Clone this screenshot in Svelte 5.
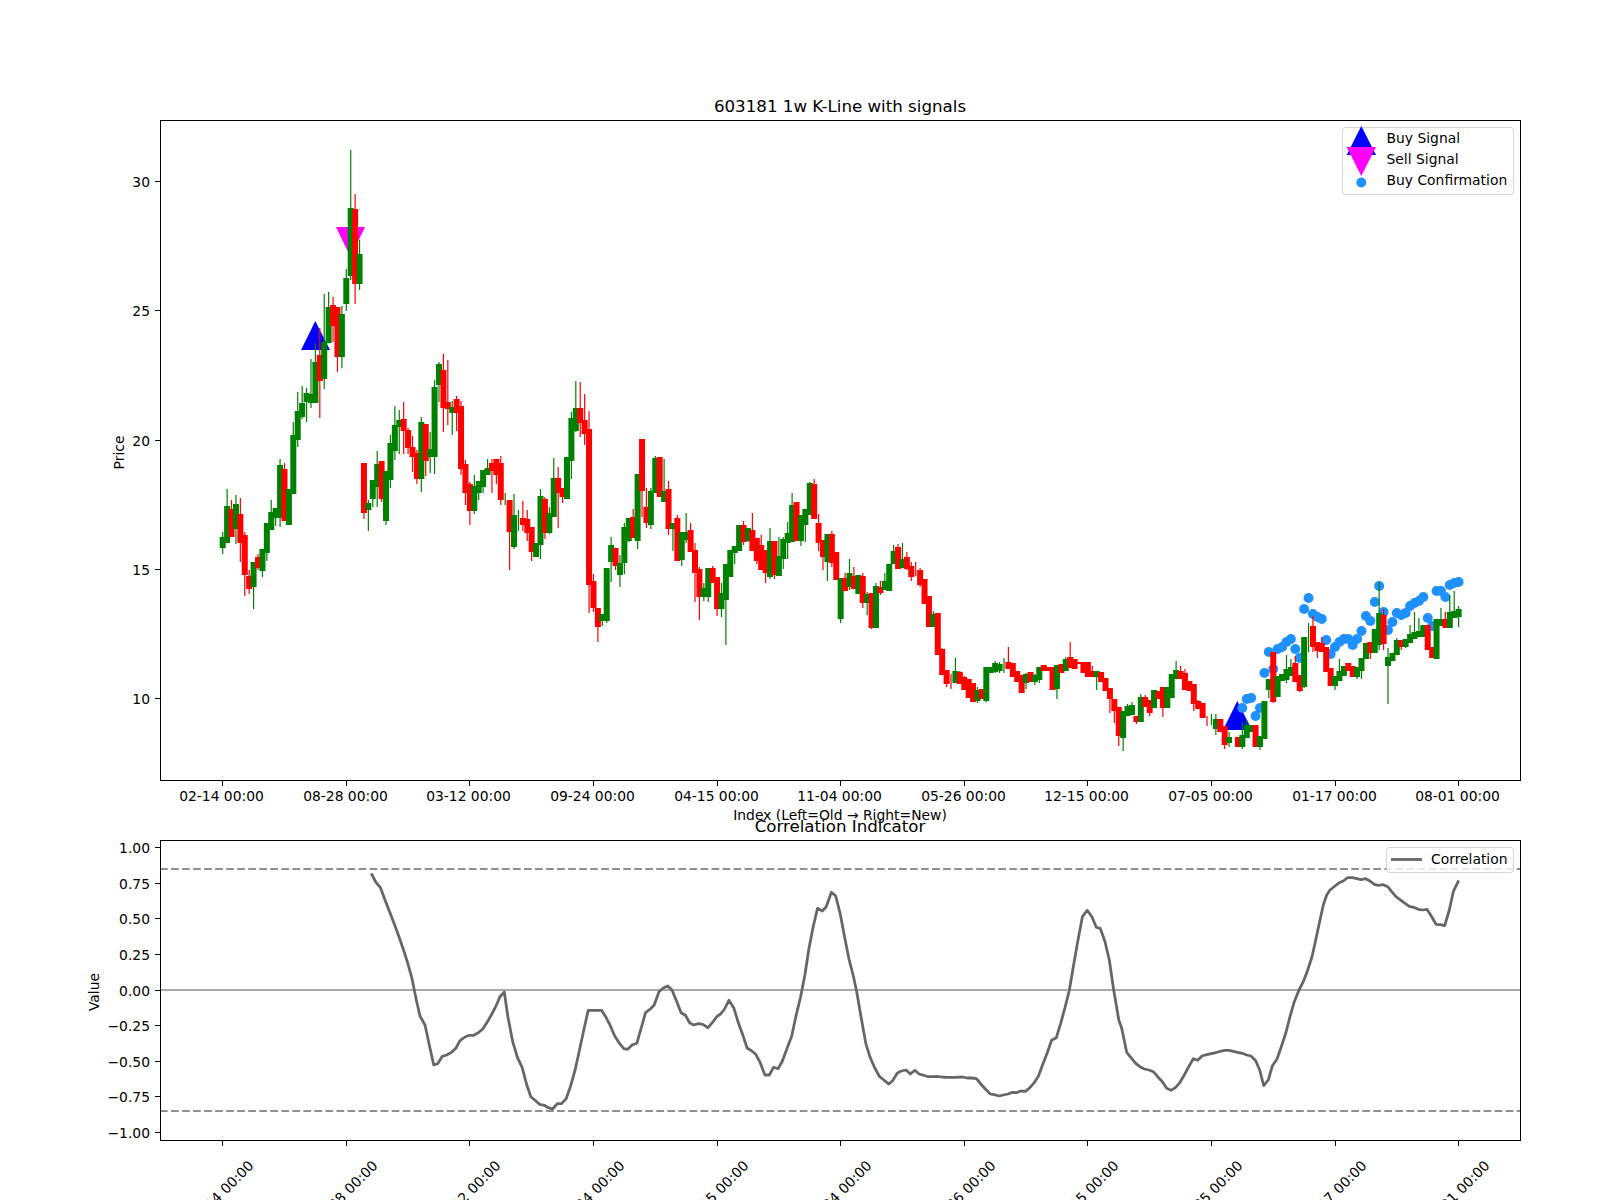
<script>
  const X0 = 222.7;
  const STEP = 4.414;
  const xOf = (i) => X0 + STEP * i;
  const snap = (v) => Math.floor(v) + 0.5;

  // colour, body top, body bottom, wick top, wick bottom (in chart pixels, oldest first)
  const rawCandles = `G 537 548 532 554,G 506 543 489 543,R 509 537 500 537,G 504 529 495 544,R 514 543 498 562,
  R 535 575 532 596,R 576 589 570 594,G 562 587 562 609,R 557 568 554 570,G 549 571 549 577,
  G 523 553 523 561,G 512 530 500 530,G 508 518 508 526,G 465 518 459 527,R 469 521 463 521,
  G 489 525 489 525,G 435 494 422 494,G 411 440 392 447,G 403 417 386 419,G 393 402 388 422,
  G 394 403 359 408,G 362 403 343 403,R 355 381 328 418,G 342 379 294 389,G 307 343 292 343,
  R 305 326 297 342,R 307 357 307 372,G 314 357 306 368,G 278 304 269 311,G 208 276 150 280,
  R 209 284 194 304,G 254 284 240 290,R 463 513 463 519,G 503 510 500 531,G 480 499 480 507,
  G 464 487 451 507,R 461 499 461 502,G 471 521 471 525,G 443 480 435 488,G 425 451 406 460,
  G 420 427 410 454,R 419 431 402 454,R 430 448 428 454,R 447 457 436 472,R 453 479 450 484,
  G 422 479 417 492,R 424 461 424 476,G 449 457 432 473,G 387 457 380 474,G 364 385 362 402,
  R 370 408 354 432,R 402 409 360 425,G 407 413 401 435,R 399 413 396 431,R 406 469 401 475,
  R 464 493 460 505,R 484 511 482 525,G 486 511 475 514,G 481 493 481 500,G 470 487 470 493,
  G 468 475 459 475,R 463 471 459 493,R 459 475 459 484,R 463 500 456 505,G 499 499 493 505,
  R 500 532 500 570,G 515 547 494 549,G 520 520 510 531,R 518 525 501 531,R 519 533 510 541,
  R 527 552 527 561,G 543 557 543 557,G 496 545 489 559,R 499 533 497 539,G 513 533 507 534,
  G 478 517 458 517,R 478 493 467 528,R 488 497 488 503,G 457 499 457 499,G 418 461 412 479,
  G 408 431 381 432,R 408 423 382 437,R 420 434 394 445,R 429 585 411 613,R 581 608 574 612,
  R 608 627 608 642,G 614 621 614 626,G 568 621 568 623,G 545 562 537 582,R 548 566 548 570,
  G 563 575 555 587,G 527 563 523 574,G 518 541 518 542,R 517 538 509 538,G 474 541 474 549,
  R 439 491 439 517,R 507 523 488 528,G 491 525 488 529,G 458 493 456 493,R 457 497 457 497,
  G 491 502 459 502,R 489 529 481 535,G 523 529 523 551,R 518 561 515 561,G 532 560 532 566,
  G 532 540 513 543,R 530 552 523 552,R 550 573 543 602,R 569 597 567 620,G 588 597 583 601,
  G 568 597 568 602,R 568 583 566 583,R 577 609 577 616,G 593 609 583 617,G 564 600 564 645,
  G 550 577 550 577,G 546 553 546 564,G 525 551 525 551,R 525 542 521 545,G 528 541 528 542,
  R 530 551 513 551,R 538 561 538 564,R 545 570 535 570,R 550 573 550 583,G 541 577 528 579,
  R 541 575 541 579,G 556 576 537 576,G 539 559 537 569,G 533 543 522 559,G 505 542 493 542,
  R 502 541 502 541,G 515 541 515 546,G 509 525 509 542,G 483 515 482 515,R 484 519 479 519,
  R 523 543 514 551,R 540 557 540 570,G 534 562 534 581,R 534 563 531 567,R 552 580 552 580,
  G 578 619 578 623,R 578 591 573 591,G 573 587 559 590,R 576 589 567 589,G 575 594 575 594,
  R 576 603 573 608,G 594 603 592 615,R 593 628 593 629,G 586 628 583 628,R 587 593 581 595,
  G 581 590 573 590,G 564 591 564 591,G 551 564 545 564,R 547 569 544 569,G 559 568 543 568,
  R 557 569 552 570,R 566 577 562 581,R 570 570 562 576,R 570 585 568 587,R 579 604 579 604,
  R 596 627 596 627,G 614 627 611 627,R 613 655 613 655,R 649 675 648 675,R 670 684 670 687,
  R 680 680 674 689,G 671 683 658 683,R 672 684 671 684,R 677 690 676 690,R 679 698 679 698,
  R 683 702 683 702,G 690 701 687 703,R 689 699 689 699,G 667 701 667 702,G 667 673 667 673,
  G 663 672 661 673,G 664 671 662 673,G 665 665 658 673,R 662 669 647 669,R 663 677 663 677,
  R 671 682 671 682,R 675 693 675 693,G 674 683 673 689,R 672 682 672 682,G 675 682 674 685,
  G 667 680 667 683,R 665 671 665 671,R 667 671 667 671,R 667 690 667 690,G 665 689 665 699,
  R 664 673 664 673,G 659 671 657 671,R 657 668 642 668,R 659 669 659 669,R 662 664 662 664,
  R 662 673 662 673,R 662 677 662 677,R 671 677 666 677,G 671 677 671 690,R 672 682 672 682,
  R 678 691 678 691,R 688 699 688 713,R 699 711 699 723,R 707 736 707 746,G 711 738 711 751,
  G 706 716 704 716,G 705 715 702 715,R 716 722 716 724,G 697 722 694 722,R 697 707 695 707,
  R 700 713 700 716,G 690 708 690 708,R 691 699 691 699,R 687 708 687 717,G 687 708 687 708,
  G 674 698 674 698,G 670 679 661 679,R 671 679 666 679,R 673 690 669 690,R 681 691 681 691,
  R 684 704 684 711,R 701 709 700 709,R 703 718 703 718,R 720 720 716 726,G 720 720 714 725,
  G 719 729 714 735,R 719 732 719 732,R 726 745 726 749,G 737 743 732 747,G 737 737 737 737,
  R 737 747 737 747,G 735 747 722 749,G 725 738 720 738,G 725 732 725 732,R 725 747 725 747,
  G 736 747 736 750,G 701 739 701 739,G 679 690 679 698,R 652 702 652 703,G 676 697 676 697,
  G 674 681 674 681,G 669 680 655 683,G 667 676 659 676,R 663 682 656 682,R 675 691 675 692,
  G 637 687 637 688,G 640 640 623 652,R 626 647 616 652,R 642 651 642 658,R 643 652 637 652,
  R 647 672 647 672,R 668 686 668 686,G 676 686 676 690,G 671 681 659 681,G 666 676 666 676,
  R 663 671 663 671,R 666 677 666 677,G 667 677 667 679,G 658 671 658 679,G 643 659 643 659,
  R 642 653 642 659,G 629 653 629 653,G 613 645 582 650,R 615 644 609 650,G 657 666 648 704,
  G 653 661 653 661,G 640 655 638 655,R 640 647 640 650,G 639 647 639 648,G 634 643 625 643,
  G 632 639 612 639,G 631 637 618 637,G 625 637 625 637,R 625 650 625 650,R 647 658 647 658,
  G 619 659 619 659,G 619 626 608 626,R 619 628 612 628,G 612 628 595 628,G 611 618 591 618,
  G 609 617 606 627`;

  const candles = rawCandles.split(",").map((row, i) => {
    const [c, top, bottom, high, low] = row.trim().split(" ");
    return { x: xOf(i), up: c === "G", top: +top, bottom: +bottom, high: +high, low: +low };
  });

  // buy confirmation dots start at candle 231
  const confirmY = [708, 699, 698, 716, 708, 673, 652, 669, 649, 647, 642, 639, 649, 658, 609, 598,
    614, 617, 619, 640, 654, 647, 642, 639, 639, 645, 639, 631, 616, 621, 602, 586, 612, 630, 622,
    613, 615, 613, 606, 603, 601, 597, 618, 626, 591, 591, 597, 585, 583, 582];
  const confirms = confirmY.map((y, k) => ({ x: xOf(231 + k), y }));

  const scale = (text, x0, y0, sx, sy) =>
    text.trim().split(/\s+/).map((p) => {
      const [x, y] = p.split(",");
      return `${(x0 + x / sx).toFixed(1)},${(y0 + y / sy).toFixed(1)}`;
    });

  const corrStart = scale(`934,280 947,306 961,322 975,360 990,398 1003,432 1017,470 1030,508 1042,545 1055,592
    1063,630 1070,665 1080,708 1095,735 1108,795 1121,855 1133,851 1147,829 1160,825 1175,817 1188,804 1200,782
    1215,771 1228,766 1241,766 1255,758 1268,747 1282,726 1294,705 1307,680 1320,650 1333,636`, 60, 780, 3, 3);
  const corrMiddle = scale(`20,470 32,545 44,592 56,622 67,672 78,710 90,722 100,733 112,736 122,743 133,747 145,731
    155,731 167,717 178,680 190,630 200,575 212,510 223,451 235,451 246,451 257,451 268,472 279,497 290,528 302,550
    313,566 323,568 334,555 346,550 358,500 368,458 380,447 390,435 402,395 412,385 424,378 435,390 446,422 458,458
    469,466 480,489 490,495 502,491 513,493 526,503 537,488 548,470 558,462 568,447 579,421 591,443 602,485 614,525
    625,564 636,572 647,583 658,608 670,645 681,645 692,622 703,626 714,604 726,565 738,527 748,470 760,412 771,345
    781,268 792,200 803,145 815,153 825,140 838,97 849,108 860,160 871,228 882,295 893,345 902,395 913,470 925,550
    936,592 948,625 960,650 971,660 983,672 993,662 1005,639 1015,633 1027,630 1038,642 1049,631 1060,642 1072,646
    1083,650 1095,650 1106,649 1117,651 1129,652 1140,652 1152,652 1170,651 1182,654 1193,654 1205,656 1216,672
    1228,688 1240,702 1250,704 1262,708 1273,705 1285,702 1296,697 1306,698 1317,693 1329,694 1340,683 1351,668
    1362,647 1373,612 1384,578 1395,541 1407,533 1418,490 1429,443 1440,390 1450,320 1461,245 1473,170 1485,151
    1497,170 1508,202 1518,205 1530,245 1541,300 1552,390 1565,480`, 500, 860, 2.529, 3);
  const corrEnd = scale(`65,625 80,697 93,713 107,730 120,740 133,747 147,750 160,755 173,770 187,785 200,805
    213,811 227,802 240,787 253,765 266,740 280,716 293,721 306,708 320,704 334,701 347,698 360,694 374,691 387,691
    400,694 413,697 427,700 440,705 453,708 467,722 479,750 491,797 505,780 517,738 531,717 544,680 557,640 570,590
    583,545 597,510 610,485 623,450 636,410 647,360 658,310 670,255 680,225 690,210 705,198 718,188 730,183 743,173
    757,173 770,176 783,179 797,176 810,183 823,193 835,196 850,194 863,200 875,215 888,230 903,241 915,250 928,259
    941,262 955,268 968,270 981,268 995,290 1008,313 1021,314 1034,317 1048,270 1060,215 1076,181`, 1100, 820, 3, 3);
  const corrPoints = [...corrStart, ...corrMiddle, ...corrEnd].join(" ");

  const tickDates = ["02-14", "08-28", "03-12", "09-24", "04-15", "11-04", "05-26", "12-15", "07-05", "01-17", "08-01"];
  const xTicks = tickDates.map((d, k) => ({ x: snap(X0 + 123.6 * k), label: `${d} 00:00` }));

  const priceTicks = [30, 25, 20, 15, 10].map((v) => ({ y: snap(181.5 + (30 - v) * 25.85), label: String(v) }));
  const corrTicks = [1, 0.75, 0.5, 0.25, 0, -0.25, -0.5, -0.75, -1].map((v) => ({
    y: snap(990 - v * 142.65),
    label: (v < 0 ? "\u2212" : "") + Math.abs(v).toFixed(2),
  }));
</script>

<figure class="figure">
  <svg width="1600" height="1200" viewBox="0 0 1600 1200" role="img" aria-label="603181 1w K-Line with signals">
    <!-- price panel -->
    <polygon class="buy" points="315.3,321 301,350 330,350" />
    <polygon class="buy" points="1237.3,701 1223,730 1252,730" />
    <polygon class="sell" points="336,227 365,227 350.5,257" />
    {#each confirms as dot}
      <circle class="confirm" cx={dot.x} cy={dot.y} r="5" />
    {/each}
    {#each candles as c}
      <line class="wick" class:up={c.up} x1={c.x} x2={c.x} y1={c.high} y2={c.low} />
      {#if c.bottom > c.top}
        <rect class="body" class:up={c.up} x={c.x - 3} y={c.top} width="6" height={c.bottom - c.top} />
      {/if}
    {/each}

    <rect class="spine" x="160.5" y="120.5" width="1360" height="660" />
    {#each xTicks as t}
      <line class="tick" x1={t.x} x2={t.x} y1="781" y2="786" />
      <text class="label middle" x={t.x - 1} y="801">{t.label}</text>
    {/each}
    {#each priceTicks as t}
      <line class="tick" x1="155" x2="160" y1={t.y} y2={t.y} />
      <text class="label end" x="150" y={t.y + 5}>{t.label}</text>
    {/each}
    <text class="title middle" x="840" y="112">603181 1w K-Line with signals</text>
    <text class="label middle" x="840" y="820">Index (Left=Old → Right=New)</text>
    <text class="label middle" transform="translate(124 452.5) rotate(-90)">Price</text>

    <rect class="legend" x="1342.5" y="127.5" width="171" height="67" rx="3" />
    <polygon class="buy" points="1361.3,126 1346.7,155 1376,155" />
    <polygon class="sell" points="1346.7,147 1376,147 1361.3,176" />
    <circle class="confirm" cx="1361.3" cy="182.5" r="5" />
    <text class="label" x="1386.5" y="142.5">Buy Signal</text>
    <text class="label" x="1386.5" y="163.5">Sell Signal</text>
    <text class="label" x="1386.5" y="184.5">Buy Confirmation</text>

    <!-- correlation panel -->
    <line class="zero" x1="160" x2="1520" y1="990" y2="990" />
    <line class="band" x1="160" x2="1520" y1="869" y2="869" />
    <line class="band" x1="160" x2="1520" y1="1111" y2="1111" />
    <polyline class="corr" points={corrPoints} />

    <rect class="spine" x="160.5" y="840.5" width="1360" height="300" />
    {#each xTicks as t}
      <line class="tick" x1={t.x} x2={t.x} y1="1141" y2="1146" />
      <text class="label middle" transform="translate({t.x + 2} 1196.5) rotate(-45)">{t.label}</text>
    {/each}
    {#each corrTicks as t}
      <line class="tick" x1="155" x2="160" y1={t.y} y2={t.y} />
      <text class="label end" x="150" y={t.y + 5.5}>{t.label}</text>
    {/each}
    <text class="title middle" x="840" y="832">Correlation Indicator</text>
    <text class="label middle" transform="translate(99 992) rotate(-90)">Value</text>

    <rect class="legend" x="1386.5" y="847.5" width="127" height="25" rx="3" />
    <line class="corr" x1="1391" x2="1422" y1="859.5" y2="859.5" />
    <text class="label" x="1431" y="863.5">Correlation</text>
  </svg>
</figure>

<style>
  :global(body) {
    background: #fff;
  }

  .figure {
    margin: 0;
    width: 1600px;
    height: 1200px;
    overflow: hidden;
  }

  svg {
    display: block;
    font-family: "DejaVu Sans", sans-serif;
  }

  .buy {
    fill: #0000ff;
  }

  .sell {
    fill: #ff00ff;
  }

  .confirm {
    fill: #1e90ff;
  }

  .wick {
    stroke: #ff0000;
    stroke-width: 1.2;
  }

  .wick.up {
    stroke: #008000;
  }

  .body {
    fill: #ff0000;
  }

  .body.up {
    fill: #008000;
  }

  .spine {
    fill: none;
    stroke: #000;
    stroke-width: 1;
  }

  .tick {
    stroke: #000;
    stroke-width: 1;
  }

  .label {
    font-size: 13.89px;
    fill: #000;
  }

  .title {
    font-size: 16.67px;
    fill: #000;
  }

  .middle {
    text-anchor: middle;
  }

  .end {
    text-anchor: end;
  }

  .legend {
    fill: rgba(255, 255, 255, 0.8);
    stroke: rgba(204, 204, 204, 0.8);
    stroke-width: 1;
  }

  .zero {
    stroke: #aaa;
    stroke-width: 2.08;
  }

  .band {
    stroke: #8f8f8f;
    stroke-width: 2.2;
    stroke-dasharray: 7.7 3.33;
  }

  .corr {
    fill: none;
    stroke: #666;
    stroke-width: 2.78;
    stroke-linejoin: round;
  }
</style>
